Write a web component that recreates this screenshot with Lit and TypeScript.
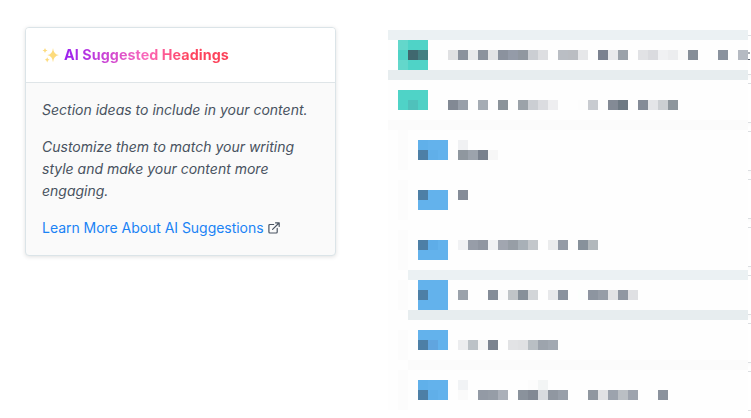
import { LitElement, html, css } from "lit";
import { customElement } from "lit/decorators.js";

type Cell = { row: number; col: number; span: number; color: string };

const T = "4fd3c7";
const B = "63b2ec";
const D = "4d7fa6";

// Each entry: row, then [start column, colours of consecutive cells].
const RUNS: [number, ...[number, string][]][] = [
  [1, [1, `63d7cb ${T} ${T}`]],
  [2, [1, `${T} 40686f 448082`], [6, "e0e1e3 8b929d e9eaec 8b929d e3e4e6 8b929e 949ba8 9097a0 cbced3 dddee1"], [17, "babec4 babdc2 e6e7e9"], [21, "7b8290 e9eaec 9ba2aa"], [25, "e1e2e5 dadbdf f0f1f3 ecedef fafafa 868e98"], [33, "8a929e"], [35, "b5bac2"]],
  [3, [1, `63d7cb ${T} ${T}`]],
  [6, [1, `${T} ${T} ${T}`]],
  [7, [1, `${T} 4fc1bb 4fd0c5`], [6, "828994 989fa9"], [9, "a5acb4"], [11, "8b939a"], [13, "9ba2a9 cbced3 dbdce0 eeeef0"], [19, "fdfdfd c8cbd0"], [22, "838a95 6e7983"], [25, "848b97 e4e5e8 cccfd3 8e969d"]],
  [11, [3, `60b0ea ${B} ${B}`], [7, "f0f1f3"]],
  [12, [3, `${D} 60afe9 ${B}`], [7, "8f979f 9ca3ac 79818d f7f7f7"]],
  [16, [3, `${D} ${B} ${B}`], [7, "858c98"]],
  [17, [3, `${B} ${B} ${B}`]],
  [21, [3, `${D} 5eade8 ${B}`], [7, "f1f2f4 979da8 9096a1 f1f2f4 a1a6b0 979ea6 a8b0b7 c3c7cb"], [16, "ebeced 949ba6"], [19, "87919b b2b8bc"]],
  [22, [3, `${B} ${B} ${B}`]],
  [25, [3, `${B} ${B} ${B}`]],
  [26, [3, `${D} ${B} ${B}`], [7, "9ba2ab"], [10, "848c98 f9f9fa c0c4c8 87909a d2d5d8"], [16, "e8e9eb 8a929e"], [19, "fcfffd 8d95a0 969da7 e2e3e5 9097a2 dfe0e3"]],
  [27, [3, `${B} ${B} ${B}`]],
  [30, [3, `${B} ${B} ${B}`]],
  [31, [3, `${D} 60a5df ${B}`], [7, "ecedef bcc2c7 f6f6f6 7b838f"], [12, "e2e3e5 e0e1e3 b9bfc4 9da4ad a2a9b2"]],
  [35, [3, `60b0ea ${B} ${B}`], [7, "f1f3f5"], [14, "fcfcfc f3f5f5"]],
  [36, [3, `${D} 60afe9 ${B}`], [7, "fafafa"], [9, "939aa5 969da7 abb0b9"], [13, "8a929c 828994 d8dbdf 9097a1 989fa9"], [20, "9097a0 e1e2e4 9ca3ad babfc4 9ea4ae"], [27, "8b929d"]],
];

// Horizontal bands: row, first column, colour.
const BANDS: [number, number, string][] = [
  [0, 0, "ebf1f3"],
  [4, 0, "e7edef"],
  [9, 0, "fbfbfb"],
  [24, 2, "ebf1f3"],
  [28, 2, "e7edef"],
  [33, 2, "fbfbfb"],
];

// Rows in which the left gutter column is faintly tinted.
const GUTTER = [10, 11, 12, 13, 15, 16, 17, 18, 20, 21, 22, 23, 25, 26, 27, 30, 31, 32, 34, 35, 36, 37];

const COLS = 36;

const CELLS: Cell[] = [
  ...BANDS.map(([row, col, color]) => ({ row, col, span: COLS - col, color })),
  ...GUTTER.map((row) => ({ row, col: 1, span: 1, color: "fcfcfc" })),
  ...RUNS.flatMap(([row, ...runs]) =>
    runs.flatMap(([start, colors]) =>
      colors.split(" ").map((color, i) => ({ row, col: start + i, span: 1, color }))
    )
  ),
];

@customElement("suggestion-card")
export class SuggestionCard extends LitElement {
  static styles = css`
    :host {
      display: block;
      box-sizing: border-box;
      width: 311px;
      height: 229px;
      border: 1px solid #dbe4e8;
      border-radius: 4px;
      background: #fafafa;
      box-shadow: 0 1px 4px rgba(0, 0, 0, 0.12);
      overflow: hidden;
      color: #485260;
      font: 14px/22px Inter, sans-serif;
    }
    .head {
      display: flex;
      align-items: center;
      gap: 4px;
      box-sizing: border-box;
      height: 55px;
      padding: 0 16px;
      border-bottom: 1px solid #dfe5e8;
      background: #fff;
    }
    .sparkles {
      width: 18px;
      height: 18px;
      flex: none;
    }
    .title {
      margin: 0;
      font-size: 14.3px;
      font-weight: 700;
      letter-spacing: 0.07px;
      color: transparent;
      background: linear-gradient(90deg, #9a20f0, #fb69b9 50%, #ff4560 75%, #fb4058);
      -webkit-background-clip: text;
      background-clip: text;
    }
    .body {
      padding: 16px;
    }
    .text {
      margin: 0 0 15px;
      font-style: italic;
    }
    .link {
      display: flex;
      align-items: center;
      gap: 4px;
      color: #1a83f5;
      letter-spacing: -0.04px;
      text-decoration: none;
      white-space: nowrap;
    }
    .external {
      width: 13px;
      height: 13px;
      color: #4b5563;
    }
  `;

  render() {
    return html`
      <div class="head">
        <svg class="sparkles" viewBox="0 0 18 18">
          <g fill="#fddb7c">
            <path d="M11 2Q11.6 8.4 17 9.1Q11.6 9.8 11 16.2Q10.4 9.8 5.2 9.1Q10.4 8.4 11 2Z" />
            <path d="M3 2Q3.4 4.2 5.5 4.5Q3.4 4.8 3 7Q2.6 4.8.5 4.5Q2.6 4.2 3 2Z" />
            <path d="M5.2 11.3Q5.6 13.4 7.6 13.8Q5.6 14.2 5.2 16.4Q4.8 14.2 2.8 13.8Q4.8 13.4 5.2 11.3Z" />
          </g>
        </svg>
        <h2 class="title">AI Suggested Headings</h2>
      </div>
      <div class="body">
        <p class="text">Section ideas to include in your content.</p>
        <p class="text">Customize them to match your writing style and make your content more engaging.</p>
        <a class="link" href="#">
          <span>Learn More About AI Suggestions</span>
          <svg class="external" viewBox="0 0 13 13" fill="none" stroke="currentColor" stroke-width="1.2" stroke-linecap="round" stroke-linejoin="round">
            <path d="M5.7 2.5H1.9Q.9 2.5 .9 3.5V10Q.9 11 1.9 11H8.2Q9.2 11 9.2 10V6.4M7.5 .8H11.2V4.5M11 1L4.6 7.4" />
          </svg>
        </a>
      </div>
    `;
  }
}

@customElement("pixel-outline")
export class PixelOutline extends LitElement {
  static styles = css`
    :host {
      display: grid;
      grid-template-columns: repeat(36, 10px);
      grid-template-rows: repeat(38, 10px);
      background: #fefefe;
    }
  `;

  render() {
    return CELLS.map(
      (c) => html`<i
        style="grid-area:${c.row + 1}/${c.col + 1}/span 1/span ${c.span};background:#${c.color}"
      ></i>`
    );
  }
}

@customElement("app-root")
export class AppRoot extends LitElement {
  static styles = css`
    :host {
      display: flex;
      align-items: flex-start;
      box-sizing: border-box;
      width: 751px;
      height: 418px;
      padding: 27px 0 0 25px;
      background: #fff;
      overflow: hidden;
    }
    .outline {
      margin: 3px 0 0 52px;
      flex: none;
    }
    .edge {
      display: flex;
      flex-direction: column;
      gap: 8px;
      width: 3px;
      padding-top: 8px;
      overflow: hidden;
      flex: none;
    }
    .row {
      display: flex;
      flex-direction: column;
      justify-content: space-between;
      box-sizing: border-box;
      height: 40px;
      padding: 16px 1px 14px 0;
      border: solid #dcdfe2;
      border-width: 1px 0;
      box-shadow: 0 2px 4px rgba(0, 0, 0, 0.05);
    }
    .mark {
      height: 2px;
      background: #a9adb3;
    }
    .mark.base {
      height: 1px;
      background: #5d6470;
    }
  `;

  render() {
    return html`
      <suggestion-card></suggestion-card>
      <pixel-outline class="outline"></pixel-outline>
      <div class="edge">
        ${Array.from({ length: 8 }, (_, i) => html`<div class="row">
          ${i === 0 ? html`<i class="mark"></i><i class="mark base"></i>` : ""}
        </div>`)}
      </div>
    `;
  }
}
